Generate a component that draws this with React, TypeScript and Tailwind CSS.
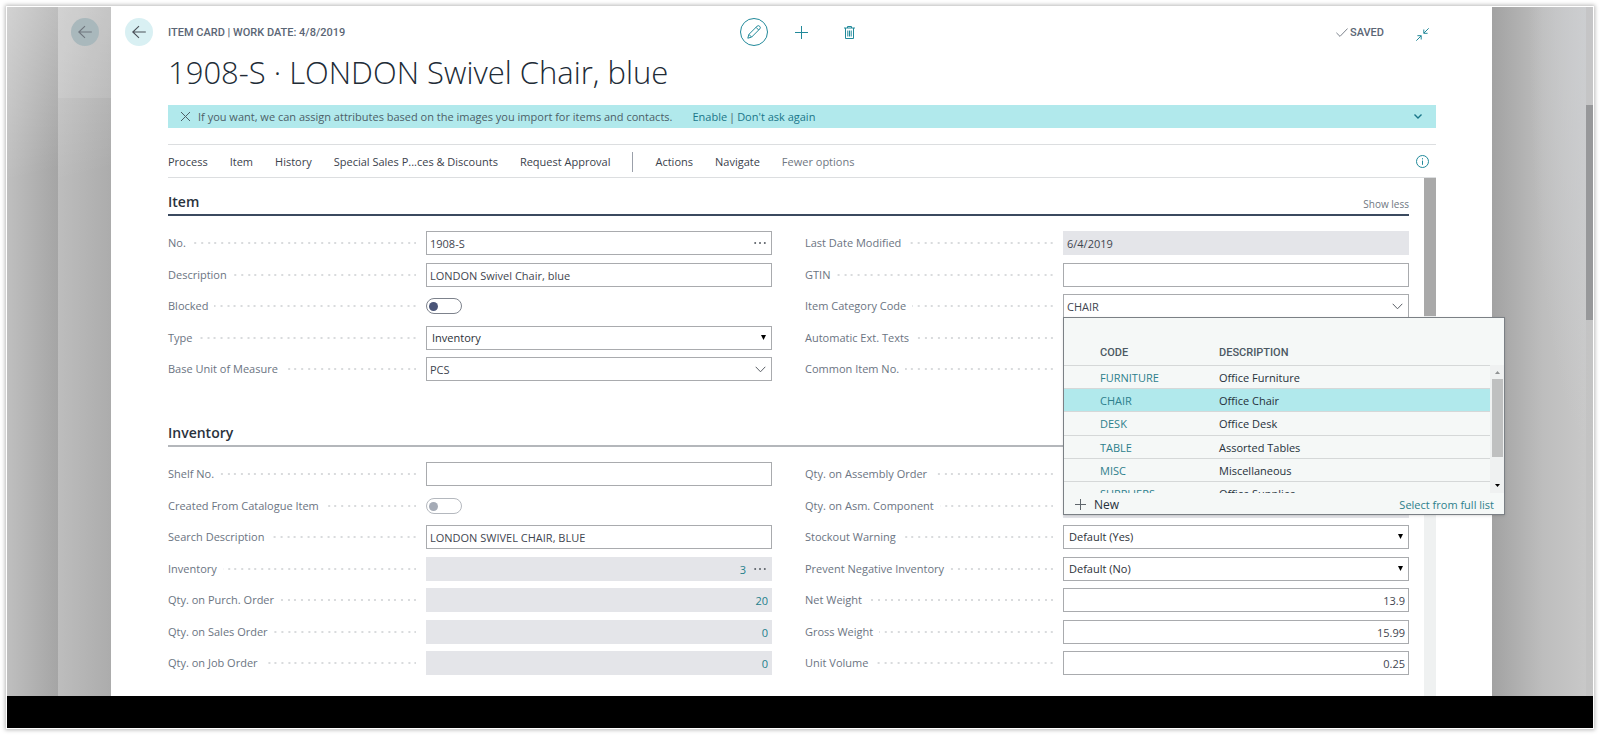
import React, { useState } from 'react';
import { clsx } from 'clsx';

interface FieldProps {
  id: string;
  label: string;
  children?: React.ReactNode;
}

interface Category {
  code: string;
  description: string;
}

const CATEGORIES: Category[] = [
  { code: 'FURNITURE', description: 'Office Furniture' },
  { code: 'CHAIR', description: 'Office Chair' },
  { code: 'DESK', description: 'Office Desk' },
  { code: 'TABLE', description: 'Assorted Tables' },
  { code: 'MISC', description: 'Miscellaneous' },
  { code: 'SUPPLIERS', description: 'Office Supplies' },
];

const MENU = ['Process', 'Item', 'History', 'Special Sales P...ces & Discounts', 'Request Approval'];

const BackIcon = () => (
  <svg className="w-4 h-4" viewBox="0 0 16 16" fill="none" stroke="currentColor" strokeWidth="1.1">
    <path d="M14.8 8H1.8M8 2.2 1.8 8 8 13.8" />
  </svg>
);

const ChevronIcon = () => (
  <svg className="w-[11px] h-[7px]" viewBox="0 0 11 7" fill="none" stroke="currentColor">
    <path d="M.7.8 5.5 5.8 10.3.8" />
  </svg>
);

const DotsIcon = () => (
  <svg className="w-3 h-1" viewBox="0 0 12 4" fill="currentColor">
    <circle cx="1.2" cy="2" r="1" />
    <circle cx="6" cy="2" r="1" />
    <circle cx="10.8" cy="2" r="1" />
  </svg>
);

/* Label, dotted leader and the control on the right */
const Field: React.FC<FieldProps> = ({ id, label, children }) => (
  <div className="flex h-6 odd:mb-2 even:mb-[7px]">
    <div className="flex flex-1 items-center gap-1.5 pr-2.5">
      <label htmlFor={id} className="text-[#6b7482] whitespace-nowrap">{label}</label>
      <span className="h-0.5 flex-1 bg-right bg-repeat-x bg-size-[20px_2px] bg-[linear-gradient(90deg,transparent_5px,#d9dbdd_5px_7px,transparent_7px_12px,#d9dbdd_12px_14px,transparent_14px_18px,#d9dbdd_18px)]"></span>
    </div>
    <div className="relative flex w-[346px] items-center">{children}</div>
  </div>
);

interface TextFieldProps extends FieldProps {
  value?: string;
  readOnly?: boolean;
  numeric?: boolean;
  action?: 'dots' | 'chevron';
}

const TextField: React.FC<TextFieldProps> = ({ id, label, value = '', readOnly, numeric, action, children }) => (
  <Field id={id} label={label}>
    <input
      id={id}
      type="text"
      defaultValue={value}
      readOnly={readOnly}
      className={clsx(
        'h-6 w-full px-[3px] outline-none',
        readOnly ? 'bg-[#e4e5e9] border border-[#e4e5e9]' : 'bg-white border border-[#a9abae]',
        numeric && 'text-right',
        numeric && readOnly ? 'text-[#24808c]' : 'text-[#3f4650]',
        numeric && action && 'pr-[25px]',
      )}
    />
    {action && (
      <button
        type="button"
        aria-label={`${label} lookup`}
        className="absolute right-1.5 top-0 flex h-6 items-center text-[#5a5f66]"
      >
        {action === 'dots' ? <DotsIcon /> : <ChevronIcon />}
      </button>
    )}
    {children}
  </Field>
);

const SelectField: React.FC<FieldProps & { value: string }> = ({ id, label, value }) => (
  <Field id={id} label={label}>
    <select
      id={id}
      className="h-6 w-full appearance-none border border-[#a9abae] bg-white px-[5px] text-[#2c3138] outline-none"
    >
      <option>{value}</option>
    </select>
    <svg className="pointer-events-none absolute right-1.5 top-[9px] h-[5px] w-[5px]" viewBox="0 0 5 5">
      <path d="M0 0h5L2.5 5z" />
    </svg>
  </Field>
);

const ToggleField: React.FC<FieldProps & { disabled?: boolean }> = ({ id, label, disabled }) => (
  <Field id={id} label={label}>
    <input
      id={id}
      type="checkbox"
      disabled={disabled}
      className="flex h-4 w-9 appearance-none items-center rounded-full border border-[#7d828c] bg-white px-0.5 before:h-[9px] before:w-[9px] before:rounded-full before:bg-[#4a5578] checked:justify-end disabled:border-[#b4b8be] disabled:before:bg-[#a5abb6]"
    />
  </Field>
);

const CategoryLookup: React.FC = () => {
  const [selected, setSelected] = useState('CHAIR');

  return (
    <div className="absolute left-0 top-full z-20 -mt-px w-[442px] border border-[#7b8085] bg-[#f5f8f7] shadow-sm">
      <div className="flex h-[175px] overflow-hidden">
        <div className="flex-1 overflow-hidden">
          <table className="w-full table-fixed border-collapse text-left">
            <thead>
              <tr className="h-[47px] border-b border-[#d5d8d8] font-[Roboto] text-[#4c5963]">
                <th className="w-[155px] pb-1 pl-9 align-bottom font-medium">CODE</th>
                <th className="pb-1 align-bottom font-medium">DESCRIPTION</th>
              </tr>
            </thead>
            <tbody>
              {CATEGORIES.map((c) => (
                <tr
                  key={c.code}
                  onClick={() => setSelected(c.code)}
                  className={clsx('h-[23px] border-b border-[#d5d8d8] nth-3:h-6', c.code === selected && 'bg-[#b1e9ec]')}
                >
                  <td className="pl-9 pt-0.5 text-[#2d808c]">{c.code}</td>
                  <td className="pt-0.5 text-[#26313a]">{c.description}</td>
                </tr>
              ))}
            </tbody>
          </table>
        </div>
        <div className="mt-[47px] flex w-3.5 flex-col items-center justify-between bg-[#eff1f1]">
          <svg className="mt-1.5 h-[3px] w-[5px]" viewBox="0 0 5 3" fill="#8f9293"><path d="M0 3h5L2.5 0z" /></svg>
          <div className="mb-auto mt-[5px] h-[78px] w-[11px] bg-[#bfc0c0]"></div>
          <svg className="mb-1.5 h-[3px] w-[5px]" viewBox="0 0 5 3"><path d="M0 0h5L2.5 3z" /></svg>
        </div>
      </div>
      <div className="flex h-[21px] items-center justify-between pl-[11px] pr-2.5 pt-0.5">
        <button type="button" className="flex items-center gap-2 text-[12px] text-[#26313a]">
          <svg className="h-[11px] w-[11px]" viewBox="0 0 11 11" stroke="#5f666c"><path d="M5.5 0v11M0 5.5h11" /></svg>
          New
        </button>
        <a href="#list" className="text-[#2d808c]">Select from full list</a>
      </div>
    </div>
  );
};

const App: React.FC = () => {
  return (
    <div className="flex min-h-screen flex-col bg-white px-1.5 pt-1.5 pb-1.5 font-['Open_Sans','Noto_Sans',sans-serif] text-[11px] leading-4">
      <div className="flex flex-1 flex-col border border-white shadow-[0_0_4px_1px_rgba(0,0,0,0.28)]">
        <div className="flex flex-1">
          {/* Dimmed pages behind the card */}
          <div className="w-[51px] bg-[linear-gradient(165deg,rgba(255,255,255,0.3),transparent_25%),linear-gradient(90deg,#bfbfbf,#a5a5a5)]"></div>
          <div className="flex w-[53px] flex-col bg-[linear-gradient(165deg,rgba(255,255,255,0.25),transparent_25%),linear-gradient(90deg,#bdbdbd,#acacac)]">
            <div className="flex h-[91px] justify-end bg-white/10 pr-3 pt-[11px]">
              <span className="flex h-7 w-7 items-center justify-center rounded-full bg-[#a9b8bc] text-[#70767e]">
                <BackIcon />
              </span>
            </div>
          </div>

          <main className="flex min-w-0 flex-1 flex-col bg-white">
            <header className="grid grid-cols-[1fr_auto_1fr] items-center pt-[11px] pl-3.5 pr-[63px]">
              <div className="flex items-center gap-[15px]">
                <button type="button" aria-label="Back" className="flex h-7 w-7 items-center justify-center rounded-full bg-[#d9f0f3] text-[#4b5058]">
                  <BackIcon />
                </button>
                <span className="pt-0.5 font-[Roboto] font-medium text-[#5b6675]">ITEM CARD | WORK DATE: 4/8/2019</span>
              </div>
              <div className="-mr-[49px] flex gap-5 text-[#21899a]">
                <button type="button" aria-label="Edit" className="flex h-7 w-7 items-center justify-center rounded-full border border-current">
                  <svg className="h-3.5 w-3.5" viewBox="0 0 14 14" fill="none" stroke="currentColor">
                    <path d="M.8 13.2 1.9 9.4 10 1.3a1.9 1.9 0 0 1 2.7 2.7L4.6 12.1zM9 2.3 11.7 5M1.9 9.4l2.7 2.7" />
                  </svg>
                </button>
                <button type="button" aria-label="New" className="flex h-7 w-7 items-center justify-center">
                  <svg className="h-[13px] w-[13px]" viewBox="0 0 13 13" stroke="currentColor"><path d="M6.5 0v13M0 6.5h13" /></svg>
                </button>
                <button type="button" aria-label="Delete" className="flex h-7 w-7 items-center justify-center">
                  <svg className="h-[13px] w-[11px]" viewBox="0 0 11 13" fill="none" stroke="currentColor">
                    <path d="M0 2h11M3.5 2V.5h4V2M1.5 2v10.5h8V2M3.8 4.5v6M5.5 4.5v6M7.2 4.5v6" />
                  </svg>
                </button>
              </div>
              <div className="flex items-center justify-end">
                <svg className="h-[9px] w-3" viewBox="0 0 12 9" fill="none" stroke="#7b828b"><path d="M.4 4.8 4 8.4 11.6.5" /></svg>
                <span className="ml-0.5 pt-0.5 font-[Roboto] font-medium text-[#5b6675]">SAVED</span>
                <button type="button" aria-label="Collapse" className="ml-8 mt-1 text-[#21899a]">
                  <svg className="h-[13px] w-[13px]" viewBox="0 0 13 13" fill="none" stroke="currentColor">
                    <path d="M12.7.3 7.8 5.2M7.8 1.5v3.8h3.8M.3 12.7l4.9-4.9M1.4 7.7h3.8v3.8" />
                  </svg>
                </button>
              </div>
            </header>

            <div className="flex flex-1 flex-col pl-[57px] pr-14">
              <h1 className="mb-1.5 text-[31px] font-light leading-[53px] text-[#212b36]">1908-S · LONDON Swivel Chair, blue</h1>

              <div className="flex h-[23px] items-center bg-[#b1e9ec] pl-[13px] pr-3.5 text-[#4c5f68]">
                <button type="button" aria-label="Dismiss">
                  <svg className="h-[9px] w-[9px]" viewBox="0 0 9 9" stroke="currentColor"><path d="m0 0 9 9M9 0 0 9" /></svg>
                </button>
                <span className="ml-2">If you want, we can assign attributes based on the images you import for items and contacts.</span>
                <a href="#enable" className="ml-5 text-[#1a7689]">Enable</a>
                <span className="mx-0.5">|</span>
                <a href="#dismiss" className="text-[#1a7689]">Don't ask again</a>
                <button type="button" aria-label="Expand" className="ml-auto text-[#1a7689]">
                  <svg className="h-[5px] w-2" viewBox="0 0 8 5" fill="none" stroke="currentColor" strokeWidth="1.4"><path d="M.5.5 4 4 7.5.5" /></svg>
                </button>
              </div>

              <nav className="mt-4 flex h-[34px] items-center gap-[22px] border-y border-[#dcdee0] pt-0.5 text-[#3b424c]">
                {MENU.map((m) => (
                  <button key={m} type="button">{m}</button>
                ))}
                <span className="h-5 w-px bg-[#9ba0aa]"></span>
                <button type="button">Actions</button>
                <button type="button">Navigate</button>
                <button type="button" className="text-[#6f7782]">Fewer options</button>
                <button type="button" aria-label="Details" className="ml-auto mr-[7px] text-[#21899a]">
                  <svg className="mb-0.5 h-[13px] w-[13px]" viewBox="0 0 13 13" fill="none" stroke="currentColor">
                    <circle cx="6.5" cy="6.5" r="6" />
                    <path d="M6.5 3.2v1.2M6.5 5.6v4.2" />
                  </svg>
                </button>
              </nav>

              <div className="flex flex-1">
                <div className="flex-1 pr-[15px]">
                  <section>
                    <div className="mb-[15px] flex h-[38px] items-center justify-between border-b-2 border-[#3b4a5f] pt-3">
                      <h2 className="text-[14px] font-semibold text-[#2a323c]">Item</h2>
                      <button type="button" className="pt-1 text-[10px] text-[#6f7782]">Show less</button>
                    </div>
                    <div className="grid grid-cols-2 gap-x-[33px]">
                      <div>
                        <TextField id="no" label="No." value="1908-S" action="dots" />
                        <TextField id="description" label="Description" value="LONDON Swivel Chair, blue" />
                        <ToggleField id="blocked" label="Blocked" />
                        <SelectField id="type" label="Type" value="Inventory" />
                        <TextField id="uom" label="Base Unit of Measure" value="PCS" action="chevron" />
                      </div>
                      <div>
                        <TextField id="modified" label="Last Date Modified" value="6/4/2019" readOnly />
                        <TextField id="gtin" label="GTIN" />
                        <TextField id="category" label="Item Category Code" value="CHAIR" action="chevron">
                          <CategoryLookup />
                        </TextField>
                        <ToggleField id="texts" label="Automatic Ext. Texts" />
                        <TextField id="common" label="Common Item No." />
                      </div>
                    </div>
                  </section>

                  <section className="mt-5">
                    <div className="mb-[15px] flex h-[38px] items-center border-b-2 border-[#b4b7bb] pt-3">
                      <h2 className="text-[14px] font-semibold text-[#2a323c]">Inventory</h2>
                    </div>
                    <div className="grid grid-cols-2 gap-x-[33px]">
                      <div>
                        <TextField id="shelf" label="Shelf No." />
                        <ToggleField id="catalogue" label="Created From Catalogue Item" disabled />
                        <TextField id="search" label="Search Description" value="LONDON SWIVEL CHAIR, BLUE" />
                        <TextField id="inventory" label="Inventory" value="3" action="dots" readOnly numeric />
                        <TextField id="purch" label="Qty. on Purch. Order" value="20" readOnly numeric />
                        <TextField id="sales" label="Qty. on Sales Order" value="0" readOnly numeric />
                        <TextField id="job" label="Qty. on Job Order" value="0" readOnly numeric />
                      </div>
                      <div>
                        <TextField id="assembly" label="Qty. on Assembly Order" readOnly />
                        <TextField id="component" label="Qty. on Asm. Component" readOnly />
                        <SelectField id="stockout" label="Stockout Warning" value="Default (Yes)" />
                        <SelectField id="negative" label="Prevent Negative Inventory" value="Default (No)" />
                        <TextField id="net" label="Net Weight" value="13.9" numeric />
                        <TextField id="gross" label="Gross Weight" value="15.99" numeric />
                        <TextField id="volume" label="Unit Volume" value="0.25" numeric />
                      </div>
                    </div>
                  </section>
                </div>
                <div className="w-3 bg-[#eff1f1]">
                  <div className="h-[138px] bg-[#a9a9a9]"></div>
                </div>
              </div>
            </div>
          </main>

          <div className="flex w-[101px] justify-end bg-[radial-gradient(ellipse_at_100%_0%,rgba(205,207,210,0.9),transparent_45%),linear-gradient(90deg,#a2a2a2,#bdbdbd_50%,#cacaca)]">
            <div className="w-[7px] bg-[#c0c0c0]/60 pt-[98px]">
              <div className="h-[215px] bg-[#97989a]"></div>
            </div>
          </div>
        </div>
        <footer className="h-8 bg-black"></footer>
      </div>
    </div>
  );
};

export default App;
